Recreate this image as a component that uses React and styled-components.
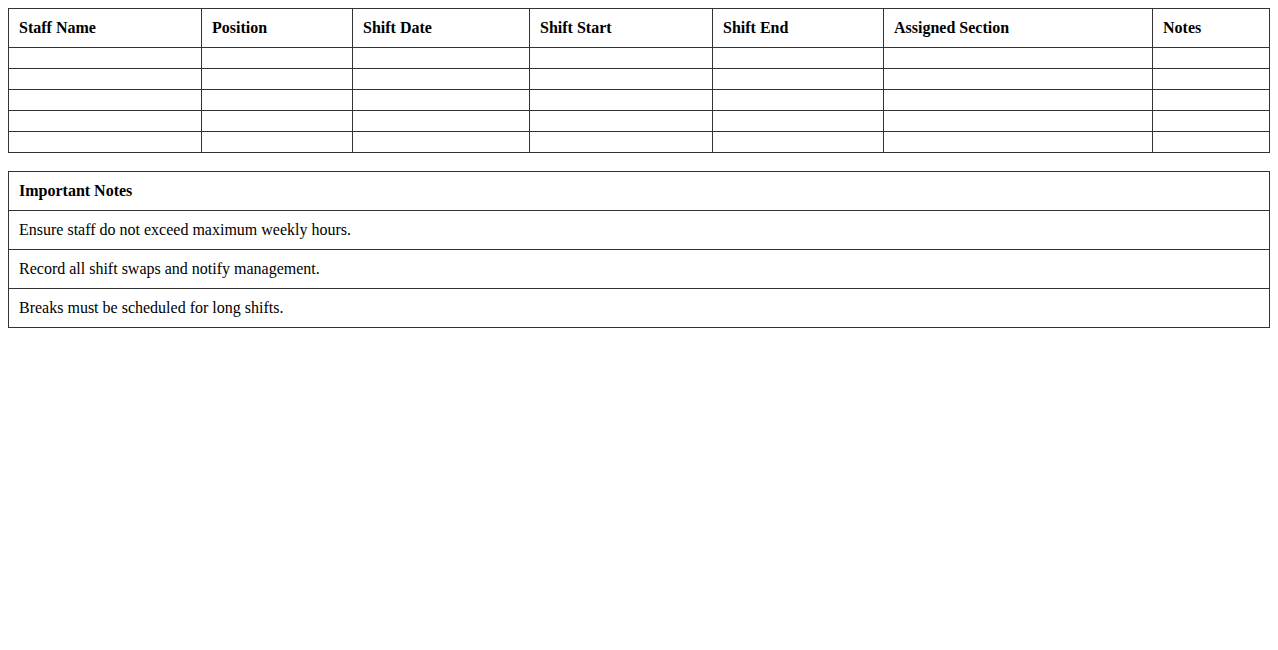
import React from 'react'
import styled, { createGlobalStyle } from 'styled-components'

const GlobalStyle = createGlobalStyle`
  body {
    margin: 8px;
    background: #fff;
    font-family: "Liberation Serif", "Times New Roman", serif;
    font-size: 16px;
    color: #000;
  }
`

const Table = styled.table`
  width: 100%;
  border-collapse: collapse;
  table-layout: fixed;
  margin-bottom: ${props => props.gap || 0}px;
`

const HeadCell = styled.th`
  border: 1px solid #333;
  padding: 10px;
  text-align: left;
  font-weight: bold;
  line-height: 18px;
`

const Cell = styled.td`
  border: 1px solid #333;
  padding: 10px;
  line-height: 18px;
`

const EmptyCell = styled.td`
  border: 1px solid #333;
  padding: 10px;
  height: 0;
  line-height: 0;
`

const columns = [
  { title: 'Staff Name', width: 193 },
  { title: 'Position', width: 151 },
  { title: 'Shift Date', width: 177 },
  { title: 'Shift Start', width: 183 },
  { title: 'Shift End', width: 171 },
  { title: 'Assigned Section', width: 269 },
  { title: 'Notes' },
]

const notes = [
  'Ensure staff do not exceed maximum weekly hours.',
  'Record all shift swaps and notify management.',
  'Breaks must be scheduled for long shifts.',
]

export default function App() {
  return (
    <>
      <GlobalStyle />
      <Table gap={18}>
        <colgroup>
          {columns.map(c => (
            <col key={c.title} style={c.width ? { width: c.width } : undefined} />
          ))}
        </colgroup>
        <thead>
          <tr>
            {columns.map(c => (
              <HeadCell key={c.title}>{c.title}</HeadCell>
            ))}
          </tr>
        </thead>
        <tbody>
          {[0, 1, 2, 3, 4].map(r => (
            <tr key={r}>
              {columns.map(c => (
                <EmptyCell key={c.title}></EmptyCell>
              ))}
            </tr>
          ))}
        </tbody>
      </Table>
      <Table>
        <thead>
          <tr>
            <HeadCell>Important Notes</HeadCell>
          </tr>
        </thead>
        <tbody>
          {notes.map(n => (
            <tr key={n}>
              <Cell>{n}</Cell>
            </tr>
          ))}
        </tbody>
      </Table>
    </>
  )
}
